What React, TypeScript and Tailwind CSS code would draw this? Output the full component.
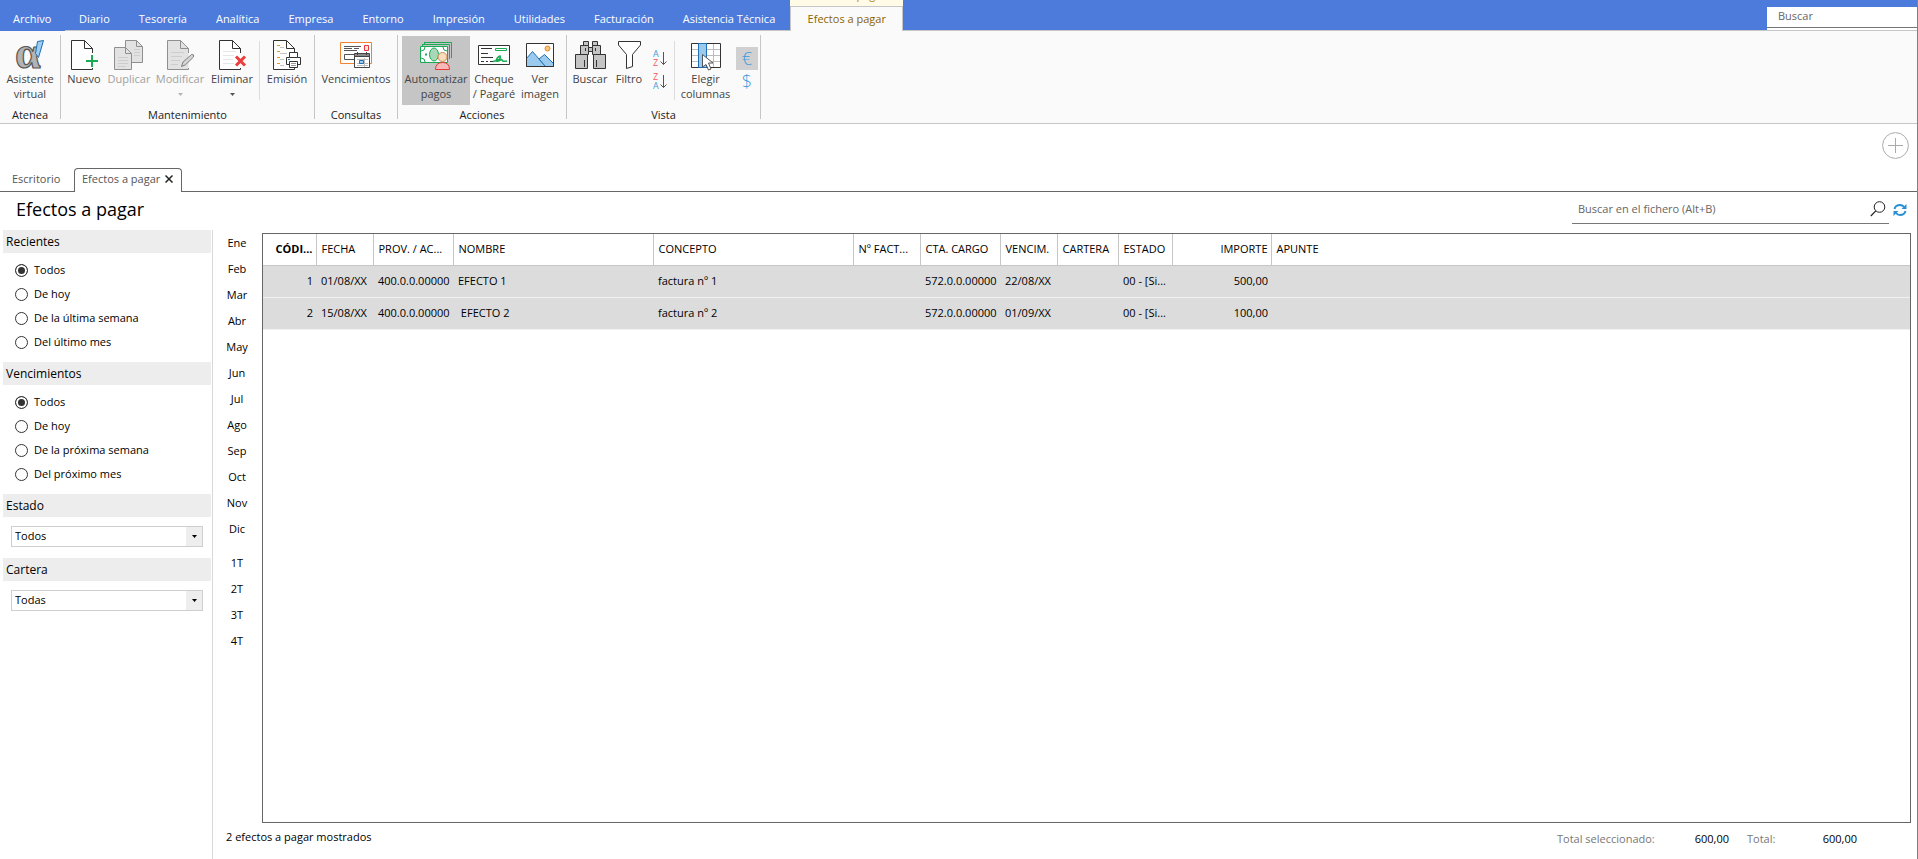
import type { ReactNode } from "react";
import clsx from "clsx";

const MENU = [
  "Diario",
  "Tesorería",
  "Analítica",
  "Empresa",
  "Entorno",
  "Impresión",
  "Utilidades",
  "Facturación",
  "Asistencia Técnica",
];

const MONTHS = ["Ene", "Feb", "Mar", "Abr", "May", "Jun", "Jul", "Ago", "Sep", "Oct", "Nov", "Dic"];
const QUARTERS = ["1T", "2T", "3T", "4T"];

const COLUMNS = [
  { key: "codigo", label: "CÓDI...", width: "w-[53px]", right: true, bold: true },
  { key: "fecha", label: "FECHA", width: "w-[57px]" },
  { key: "prov", label: "PROV. / AC...", width: "w-[80px]" },
  { key: "nombre", label: "NOMBRE", width: "w-[200px]" },
  { key: "concepto", label: "CONCEPTO", width: "w-[200px]" },
  { key: "factura", label: "Nº FACT...", width: "w-[67px]" },
  { key: "cuenta", label: "CTA. CARGO", width: "w-[80px]" },
  { key: "vencim", label: "VENCIM.", width: "w-[57px]" },
  { key: "cartera", label: "CARTERA", width: "w-[61px]" },
  { key: "estado", label: "ESTADO", width: "w-[54px]" },
  { key: "importe", label: "IMPORTE", width: "w-[99px]", right: true },
  { key: "apunte", label: "APUNTE", width: "" },
];

const ROWS: Record<string, string>[] = [
  {
    codigo: "1",
    fecha: "01/08/XX",
    prov: "400.0.0.00000",
    nombre: "EFECTO 1",
    concepto: "factura nº 1",
    cuenta: "572.0.0.00000",
    vencim: "22/08/XX",
    estado: "00 - [Si...",
    importe: "500,00",
  },
  {
    codigo: "2",
    fecha: "15/08/XX",
    prov: "400.0.0.00000",
    nombre: " EFECTO 2",
    concepto: "factura nº 2",
    cuenta: "572.0.0.00000",
    vencim: "01/09/XX",
    estado: "00 - [Si...",
    importe: "100,00",
  },
];

/* ---------- Icons ---------- */

function Icon({ width, children }: { width: number; children: ReactNode }) {
  return (
    <svg
      width={width}
      height="32"
      viewBox={`0 0 ${width} 32`}
      fill="none"
      aria-hidden="true"
      className="shrink-0 overflow-visible"
    >
      {children}
    </svg>
  );
}

function Page({ stroke = "#333", fill = "#fff" }: { stroke?: string; fill?: string }) {
  return (
    <>
      <path d="M.5 1.5H13.5L21.5 9.5V30.5H.5Z" fill={fill} />
      <path d="M21.5 14V9.5L13.5 1.5H.5V30.5H21.5V29" stroke={stroke} />
      <path d="M13.5 1.5V9.5H21.5" stroke={stroke} />
    </>
  );
}

function AlphaIcon() {
  return (
    <Icon width={30}>
      <text x="0" y="29" fontFamily="Liberation Serif, serif" fontWeight="700" fontSize="46" fill="#b3b3b3" stroke="#555" strokeWidth="1.2">
        α
      </text>
      <path d="M22.5 2.5L28.5 1.5L23.5 18.5L20.5 14.5Z" fill="#9ccdf0" stroke="#1f6fb5" />
    </Icon>
  );
}

function NewIcon() {
  return (
    <Icon width={26}>
      <Page />
      <path d="M21 16V28M15 22H27" stroke="#1aab54" strokeWidth="2" />
    </Icon>
  );
}

function DuplicateIcon() {
  return (
    <Icon width={30}>
      <path d="M11.5 1.5H22.5L28.5 7.5V23.5H11.5Z" fill="#e2e2e2" stroke="#8f8f8f" />
      <path d="M22.5 1.5V7.5H28.5" stroke="#8f8f8f" />
      <path d="M.5 8.5H11.5L17.5 14.5V30.5H.5Z" fill="#e2e2e2" stroke="#8f8f8f" />
      <path d="M11.5 8.5V14.5H17.5" stroke="#8f8f8f" />
      <path d="M4 18.5H14M4 21.5H14M4 24.5H14M4 27.5H12M20 10.5H26M20 13.5H26M20 16.5H26" stroke="#cdcdcd" />
    </Icon>
  );
}

function EditIcon() {
  return (
    <Icon width={26}>
      <Page stroke="#8f8f8f" fill="#e2e2e2" />
      <path d="M4 13.5H17M4 17.5H15M4 21.5H13M4 25.5H11" stroke="#cdcdcd" />
      <path d="M14.5 27.5L16 23L24.5 15.5Q27.5 15 26.5 18L18.5 25.8Z" fill="#d4d4d4" stroke="#808080" />
    </Icon>
  );
}

function DeleteIcon() {
  return (
    <Icon width={26}>
      <Page />
      <path d="M4 12.5H17M4 16.5H15M4 20.5H14M4 24.5H15" stroke="#e6e6e6" />
      <path d="M17 17.5L26 26.5M26 17.5L17 26.5" stroke="#ee3b3b" strokeWidth="3" />
    </Icon>
  );
}

function PrintIcon() {
  return (
    <Icon width={28}>
      <Page />
      <path d="M4 6.5H7M4 12.5H7M4 18.5H7M4 24.5H7" stroke="#f0941e" />
      <path d="M7 8.5H11M7 14.5H14M7 20.5H11M7 26.5H11" stroke="#c4c4c4" />
      <path d="M16.5 13.5H24.5V18.5H27.5V25.5H13.5V18.5H16.5Z" fill="#fff" stroke="#333" />
      <path d="M16.5 18.5H24.5" stroke="#333" />
      <path d="M16.5 22.5H24.5V28.5H16.5Z" fill="#fff" stroke="#333" />
      <path d="M18 24.5H23M18 26.5H23" stroke="#999" />
      <path d="M15 20.5H17" stroke="#1f82c9" />
    </Icon>
  );
}

function DueIcon() {
  return (
    <Icon width={32}>
      <path d="M.5 3.5H31.5V24.5H.5Z" fill="#fff" stroke="#ee8434" />
      <path d="M4 7.5H21M4 9.5H12M14 9.5H19M4 11.5H17" stroke="#555" />
      <path d="M24.5 6.5H28.5V11.5H24.5Z" fill="#fde4e4" stroke="#e53935" />
      <path d="M4.5 15.5H15V20.5H4.5Z" stroke="#555" />
      <path d="M14.5 16.5H29.5V28.5H14.5Z" fill="#fff" stroke="#444" />
      <path d="M14.5 14.5H29.5V17.5H14.5Z" fill="#888" stroke="#444" />
      <path d="M17.5 13V16M26.5 13V16" stroke="#444" />
      <path d="M17 20.5H28M17 24.5H28M17 26.5H28M24.5 19V28" stroke="#bbb" />
      <path d="M19.5 21.5H23.5V24.5H19.5Z" fill="#9ccdf0" stroke="#1f6fb5" />
    </Icon>
  );
}

function PayIcon() {
  return (
    <Icon width={32}>
      <path d="M4.5 3.5H31.5V19M2.5 5.5H29.5V20M4.5 3V5M2.5 5V7" stroke="#1aab54" />
      <path d="M.5 7.5H27.5V23.5H.5Z" fill="#fff" stroke="#1aab54" />
      <path d="M1 12Q5 12 5 8M1 19Q5 19 5 23M23 8Q23 12 27 12" stroke="#1aab54" />
      <path d="M5 15.5H7" stroke="#1aab54" strokeWidth="2" />
      <ellipse cx="14" cy="15.5" rx="4.5" ry="6.5" fill="#a9d8b8" stroke="#1aab54" />
      <path d="M15.5 30.5Q15.5 23.5 22.5 23.5Q29.5 23.5 29.5 30.5Z" fill="#f9b9b9" stroke="#e53935" />
      <circle cx="22.5" cy="18" r="4.5" fill="#f9dcc0" stroke="#c98a4c" />
    </Icon>
  );
}

function ChequeIcon() {
  return (
    <Icon width={32}>
      <path d="M.5 6.5H31.5V25.5H.5Z" fill="#fff" stroke="#333" />
      <path d="M3 9.5H14M3 14.5H10M3 18.5H15M3 22.5H6M8 22.5H10M12 22.5H15" stroke="#333" />
      <path d="M17.5 9.5H28.5V11.5H17.5Z" stroke="#1aab54" />
      <path d="M15 22.5Q24 21 22 17Q19 18 18 22Q21 23 24 20Q23 23 29 22" stroke="#1aab54" strokeWidth="1.5" />
    </Icon>
  );
}

function ImageIcon() {
  return (
    <Icon width={28}>
      <path d="M.5 4.5H27.5V27.5H.5Z" fill="#fff" />
      <path d="M.5 19.5L6.5 12.5L19.5 27.5H.5Z" fill="#9acbee" stroke="#1f6fb5" />
      <path d="M13 20L18.5 15.5L27.5 24.5V27.5H19.5Z" fill="#9acbee" stroke="#1f6fb5" />
      <circle cx="21.5" cy="9.5" r="2.5" fill="#fbc27a" stroke="#e58a2b" />
      <path d="M.5 4.5H27.5V27.5H.5Z" stroke="#333" />
    </Icon>
  );
}

function BinocularsIcon() {
  return (
    <Icon width={30}>
      <g fill="#c4c4c4" stroke="#333">
        <path d="M8.5 2.5H13.5V6.5H8.5ZM17.5 2.5H22.5V6.5H17.5Z" />
        <path d="M5.5 6.5H13.5V15.5H5.5ZM17.5 6.5H25.5V15.5H17.5Z" />
        <path d="M.5 15.5H12.5V29.5H.5ZM18.5 15.5H30.5V29.5H18.5Z" />
        <path d="M13.5 8.5H17.5V12.5H13.5Z" />
      </g>
      <path d="M9.5 21V28M21.5 21V28M10.5 9V12M20.5 9V12" stroke="#333" />
    </Icon>
  );
}

function FilterIcon() {
  return (
    <Icon width={22}>
      <path d="M.5 2.5H22.5V6L14.5 15.5V27.5L8.5 29.5V15.5L.5 6Z" fill="#fff" stroke="#333" />
    </Icon>
  );
}

function ColumnsIcon() {
  return (
    <Icon width={30}>
      <path d="M.5 4.5H29.5V28.5H.5Z" fill="#fff" />
      <path d="M1 10.5H29M1 16.5H29M1 22.5H29M22.5 5V28" stroke="#bdbdbd" />
      <path d="M.5 4.5H29.5V28.5H.5Z" stroke="#333" />
      <path d="M7.5 4.5H15.5V28.5H7.5Z" fill="#9acbee" stroke="#1f6fb5" />
      <path d="M11.5 15.5L22 24H17.5L20 30L17.5 31L15 25.5L11.5 28Z" fill="#fff" stroke="#555" />
    </Icon>
  );
}

function SortIcon({ top, bottom }: { top: string; bottom: string }) {
  const color = (c: string) => (c === "A" ? "#3d9be0" : "#f25c5c");
  return (
    <svg
      width="14"
      height="18"
      viewBox="0 0 14 18"
      fill="none"
      fontFamily="Open Sans, sans-serif"
      fontSize="9"
      aria-hidden="true"
      className="overflow-visible"
    >
      <text x="0" y="7" fill={color(top)}>{top}</text>
      <text x="0" y="16" fill={color(bottom)}>{bottom}</text>
      <path d="M10.5 2V14.5M7.5 11.5L10.5 14.5L13.5 11.5" stroke="#555" />
    </svg>
  );
}

function SearchIcon() {
  return (
    <svg width="16" height="16" viewBox="0 0 16 16" fill="none" aria-hidden="true">
      <circle cx="9.5" cy="6" r="5.3" stroke="#222" />
      <path d="M5.8 9.8L.8 15" stroke="#222" strokeWidth="1.2" />
    </svg>
  );
}

function RefreshIcon() {
  return (
    <svg width="14" height="14" viewBox="0 0 14 14" fill="none" aria-hidden="true">
      <path d="M1.5 6Q2.5 2 7 2Q9.5 2 11 4M12.5 8Q11.5 12 7 12Q4.5 12 3 10" stroke="#2a8fd4" strokeWidth="2" />
      <path d="M13.5 1V6H8.5ZM.5 13V8H5.5Z" fill="#2a8fd4" />
    </svg>
  );
}

/* ---------- Ribbon ---------- */

type ToolProps = {
  icon: ReactNode;
  lines: string[];
  width: string;
  active?: boolean;
  disabled?: boolean;
  menu?: boolean;
};

function Tool({ icon, lines, width, active, disabled, menu }: ToolProps) {
  return (
    <button
      type="button"
      disabled={disabled}
      className={clsx(
        "flex h-[69px] shrink-0 flex-col items-center whitespace-nowrap pt-[3px]",
        width,
        active ? "bg-[#c5c5c5]" : "hover:bg-[#e6e6e6]",
        disabled ? "text-[#a0a0a0]" : "text-[#444]"
      )}
    >
      {icon}
      {lines.map((l) => (
        <span key={l} className="leading-[15px]">
          {l}
        </span>
      ))}
      {menu && (
        <svg width="5" height="3" viewBox="0 0 5 3" className="mt-[7px]" aria-hidden="true">
          <path d="M0 0H5L2.5 3Z" fill={disabled ? "#b5b5b5" : "#555"} />
        </svg>
      )}
    </button>
  );
}

function Group({ title, children }: { title: string; children: ReactNode }) {
  return (
    <section className="flex">
      <div className="flex flex-col">
        <div className="mt-[5px] flex">{children}</div>
        <h2 className="h-[18px] text-center leading-5 text-[#222]">{title}</h2>
      </div>
      <div className="mt-1 h-[84px] w-px bg-[#c6c6c6]" />
    </section>
  );
}

function Divider() {
  return <div className="mt-[5px] h-[59px] w-px bg-[#dcdcdc]" />;
}

function Ribbon() {
  return (
    <div className="flex h-[93px] shrink-0 border-b border-[#c6c6c6] bg-[#fafafa]">
      <Group title="Atenea">
        <Tool width="w-[60px]" icon={<AlphaIcon />} lines={["Asistente", "virtual"]} />
      </Group>
      <Group title="Mantenimiento">
        <Tool width="w-[46px]" icon={<NewIcon />} lines={["Nuevo"]} />
        <Tool width="w-[44px]" icon={<DuplicateIcon />} lines={["Duplicar"]} disabled />
        <Tool width="w-[58px]" icon={<EditIcon />} lines={["Modificar"]} disabled menu />
        <Tool width="w-[46px]" icon={<DeleteIcon />} lines={["Eliminar"]} menu />
        <div className="w-1" />
        <Divider />
        <Tool width="w-[54px]" icon={<PrintIcon />} lines={["Emisión"]} />
      </Group>
      <Group title="Consultas">
        <Tool width="w-[82px]" icon={<DueIcon />} lines={["Vencimientos"]} />
      </Group>
      <Group title="Acciones">
        <div className="w-1" />
        <Tool width="w-[68px]" icon={<PayIcon />} lines={["Automatizar", "pagos"]} active />
        <Tool width="w-[48px]" icon={<ChequeIcon />} lines={["Cheque", "/ Pagaré"]} />
        <Tool width="w-[44px]" icon={<ImageIcon />} lines={["Ver", "imagen"]} />
        <div className="w-1" />
      </Group>
      <Group title="Vista">
        <Tool width="w-[46px]" icon={<BinocularsIcon />} lines={["Buscar"]} />
        <Tool width="w-[32px]" icon={<FilterIcon />} lines={["Filtro"]} />
        <div className="flex w-[29px] flex-col items-center gap-[5px] pt-[14px]">
          <button type="button" aria-label="Orden ascendente">
            <SortIcon top="A" bottom="Z" />
          </button>
          <button type="button" aria-label="Orden descendente">
            <SortIcon top="Z" bottom="A" />
          </button>
        </div>
        <Divider />
        <Tool width="w-[61px]" icon={<ColumnsIcon />} lines={["Elegir", "columnas"]} />
        <div className="flex w-6 flex-col pt-[11px] text-lg font-light leading-[23px] text-[#3d9be0]">
          <button type="button" className="h-[23px] w-[22px] bg-[#d0d0d0]">
            €
          </button>
          <button type="button" className="h-[23px] w-[22px]">
            $
          </button>
        </div>
      </Group>
    </div>
  );
}

function MenuBar() {
  return (
    <nav className="flex h-[31px] shrink-0 bg-[#4c7bdc] text-white">
      <button type="button" className="w-[65px] shrink-0 pr-3 pl-[13px] pt-2 text-left">
        Archivo
      </button>
      <div className="flex flex-1 gap-px border-b border-[#c6c6c6]">
        {MENU.map((m) => (
          <button key={m} type="button" className="shrink-0 whitespace-nowrap px-[14px] pt-2">
            {m}
          </button>
        ))}
        <div className="-mb-px flex w-[113px] shrink-0 flex-col bg-[#fffbe6] text-[#8a6400]">
          <div className="flex h-[6px] items-end justify-center overflow-hidden pb-[6px] text-[#b8860b]">
            <span className="leading-[11px]">Efectos a pagar</span>
          </div>
          <button type="button" className="flex-1 border-x border-t border-[#c6c6c6] bg-[#fafafa]">
            Efectos a pagar
          </button>
        </div>
        <div className="flex-1" />
        <div className="mt-[7px] w-[150px] bg-white">
          <input
            type="text"
            aria-label="Buscar"
            placeholder="Buscar"
            className="block h-[21px] w-full border-b border-[#777] px-[11px] pb-1 text-black outline-none placeholder:text-[#666]"
          />
        </div>
      </div>
    </nav>
  );
}

/* ---------- Sidebar ---------- */

function PanelTitle({ children }: { children: ReactNode }) {
  return <h3 className="ml-[3px] mr-px h-[23px] bg-[#ededed] pl-[3px] text-xs leading-[23px]">{children}</h3>;
}

function RadioPanel({ title, name, options }: { title: string; name: string; options: string[] }) {
  return (
    <fieldset>
      <PanelTitle>{title}</PanelTitle>
      <div className="pt-[5px] pb-2">
        {options.map((o, i) => (
          <label key={o} className="flex h-6 items-center gap-[6px] pl-[15px]">
            <input
              type="radio"
              name={name}
              defaultChecked={i === 0}
              className="size-[13px] appearance-none rounded-full border border-[#333] bg-white checked:bg-[#333] checked:shadow-[inset_0_0_0_2px_#fff]"
            />
            {o}
          </label>
        ))}
      </div>
    </fieldset>
  );
}

function SelectPanel({ title, value }: { title: string; value: string }) {
  return (
    <div>
      <PanelTitle>{title}</PanelTitle>
      <div className="relative mt-[9px] mr-[9px] mb-[11px] ml-[11px]">
        <select
          aria-label={title}
          defaultValue={value}
          className="block h-[21px] w-full appearance-none border border-[#cfcfcf] bg-white px-[3px] outline-none"
        >
          <option>{value}</option>
        </select>
        <span className="pointer-events-none absolute inset-y-px right-px flex w-4 items-center justify-center bg-[#eee]">
          <svg width="5" height="3" viewBox="0 0 5 3" aria-hidden="true">
            <path d="M0 0H5L2.5 3Z" fill="#000" />
          </svg>
        </span>
      </div>
    </div>
  );
}

function Sidebar() {
  return (
    <aside className="w-[213px] shrink-0 border-r border-[#d8d8d8]">
      <RadioPanel
        title="Recientes"
        name="recientes"
        options={["Todos", "De hoy", "De la última semana", "Del último mes"]}
      />
      <RadioPanel
        title="Vencimientos"
        name="vencimientos"
        options={["Todos", "De hoy", "De la próxima semana", "Del próximo mes"]}
      />
      <SelectPanel title="Estado" value="Todos" />
      <SelectPanel title="Cartera" value="Todas" />
    </aside>
  );
}

/* ---------- Grid ---------- */

function PeriodPicker() {
  return (
    <div className="flex w-[49px] shrink-0 flex-col pr-px">
      {MONTHS.map((m) => (
        <button key={m} type="button" className="h-[26px]">
          {m}
        </button>
      ))}
      <div className="h-2" />
      {QUARTERS.map((q) => (
        <button key={q} type="button" className="h-[26px]">
          {q}
        </button>
      ))}
    </div>
  );
}

function EffectsTable() {
  return (
    <div className="mt-[3px] flex-1 border border-[#666]">
      <table className="w-full table-fixed border-collapse whitespace-pre">
        <thead>
          <tr className="h-[31px] border-b border-[#c6c6c6]">
            {COLUMNS.map((c) => (
              <th
                key={c.key}
                className={clsx(
                  "overflow-hidden border-r border-[#c6c6c6] pl-[5px] pr-[3px] last:border-r-0",
                  c.width,
                  c.right ? "text-right" : "text-left",
                  c.bold ? "font-bold" : "font-normal"
                )}
              >
                {c.label}
              </th>
            ))}
          </tr>
        </thead>
        <tbody>
          {ROWS.map((r) => (
            <tr key={r.codigo} className="h-8 border-b border-[#f2f2f2] bg-[#dcdcdc]">
              {COLUMNS.map((c) => (
                <td key={c.key} className={clsx("pl-[5px] pr-[3px]", c.right && "text-right")}>
                  {r[c.key]}
                </td>
              ))}
            </tr>
          ))}
        </tbody>
      </table>
    </div>
  );
}

function DocumentTabs() {
  return (
    <div className="flex h-[68px] shrink-0 items-end text-[#555]">
      <a href="#escritorio" className="flex h-6 w-[74px] items-center border-b border-[#666] pb-px pl-3">
        Escritorio
      </a>
      <div className="flex h-6 w-[108px] items-center justify-between whitespace-nowrap rounded-t border-x border-t border-[#666] pr-2 pb-[3px] pl-[7px]">
        Efectos a pagar
        <button type="button" aria-label="Cerrar pestaña">
          <svg width="8" height="8" viewBox="0 0 8 8" aria-hidden="true">
            <path d="M.5 .5L7.5 7.5M7.5 .5L.5 7.5" stroke="#222" strokeWidth="1.5" />
          </svg>
        </button>
      </div>
      <div className="flex flex-1 items-start justify-end self-stretch border-b border-[#666] pt-2 pr-2">
        <button type="button" aria-label="Añadir">
          <svg width="27" height="27" viewBox="0 0 27 27" fill="none" aria-hidden="true">
            <circle cx="13.5" cy="13.5" r="12.9" stroke="#aaa" />
            <path d="M6 13.5H21M13.5 6V21" stroke="#aaa" />
          </svg>
        </button>
      </div>
    </div>
  );
}

export default function App() {
  return (
    <div className="flex min-h-screen flex-col border-r border-[#808080] bg-white font-['Open_Sans','Noto_Sans',sans-serif] text-[11px] text-black">
      <MenuBar />
      <Ribbon />
      <DocumentTabs />

      <header className="flex h-[38px] shrink-0 items-start pr-[10px] pl-4">
        <h1 className="flex-1 text-lg leading-[34px]">Efectos a pagar</h1>
        <div className="flex h-8 w-[317px] items-center border-b border-[#777] pt-[3px]">
          <input
            type="text"
            aria-label="Buscar en el fichero"
            placeholder="Buscar en el fichero (Alt+B)"
            className="min-w-0 flex-1 px-[6px] outline-none placeholder:text-[#666]"
          />
          <button type="button" aria-label="Buscar" className="mr-[3px]">
            <SearchIcon />
          </button>
        </div>
        <button type="button" aria-label="Actualizar" className="mt-[11px] ml-1">
          <RefreshIcon />
        </button>
      </header>

      <div className="flex flex-1">
        <Sidebar />
        <main className="flex flex-1 flex-col">
          <div className="flex flex-1 pr-[6px]">
            <PeriodPicker />
            <EffectsTable />
          </div>
          <footer className="flex h-9 shrink-0 items-start pr-[60px] pl-[13px] leading-8">
            <span className="flex-1 leading-7">2 efectos a pagar mostrados</span>
            <span className="w-[98px] text-[#777]">Total seleccionado:</span>
            <span className="w-[74px] text-right">600,00</span>
            <span className="ml-[18px] w-[36px] text-[#777]">Total:</span>
            <span className="w-[74px] text-right">600,00</span>
          </footer>
        </main>
      </div>
    </div>
  );
}
